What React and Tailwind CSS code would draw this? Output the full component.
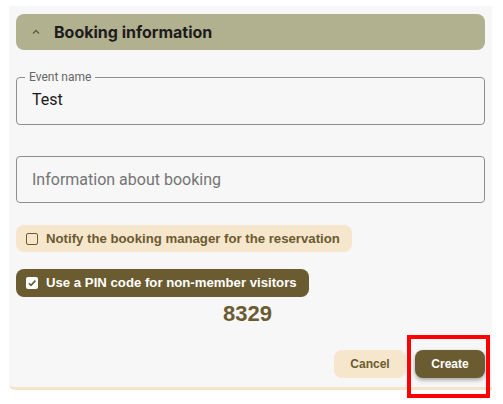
import React from "react";

export default function App() {
  return (
    <div className="relative w-[503px] h-[404px] bg-white pt-[6px] pl-[9px]">
      <div className="w-[483px] h-[384px] bg-[#f7f7f7] border-b-[3px] border-[#f4e4c9] rounded-bl-[6px] px-[7px] pt-[8px] flex flex-col">
        <div className="h-[36px] rounded-[8px] bg-[#b1b08f] flex items-center pl-[16px]">
          <svg width="8" height="6" viewBox="0 0 8 6" className="mr-[14px]">
            <polyline points="1,4.5 4,1.5 7,4.5" fill="none" stroke="#6b5a30" strokeWidth="1.4" />
          </svg>
          <span className="text-[16px] font-bold text-[#1c1c1c]" style={{ fontFamily: "Inter, sans-serif" }}>
            Booking information
          </span>
        </div>

        <fieldset className="mt-[21px] h-[54px] border border-[#8f8f8f] rounded-[4px] px-[8px] pb-0" style={{ fontFamily: "Roboto, sans-serif" }}>
          <legend className="px-[4px] text-[12px] leading-[12px] text-[#666]">Event name</legend>
          <div className="pl-[7px] pt-[5px] text-[16px] text-[#1a1a1a]">Test</div>
        </fieldset>

        <div className="mt-[31px] h-[47px] border border-[#8f8f8f] rounded-[4px] flex items-center pl-[15px] text-[16px] text-[#747474]" style={{ fontFamily: "Roboto, sans-serif" }}>
          Information about booking
        </div>

        <div className="flex flex-col items-start" style={{ fontFamily: "'Liberation Sans', Arial, sans-serif" }}>
          <div className="mt-[22px] h-[27px] w-[336px] rounded-[8px] bg-[#f6e6cc] flex items-center pl-[10px]">
            <span className="w-[12px] h-[12px] border-[1.5px] border-[#6b5a30] rounded-[2px] mr-[8px]" />
            <span className="text-[13.2px] font-bold text-[#6b5a30]">Notify the booking manager for the reservation</span>
          </div>
          <div className="mt-[17px] h-[28px] w-[293px] rounded-[8px] bg-[#6b5b31] flex items-center pl-[10px]">
            <span className="w-[12px] h-[12px] bg-white rounded-[2px] mr-[8px] flex items-center justify-center">
              <svg width="10" height="10" viewBox="0 0 10 10">
                <polyline points="1.8,5.2 4,7.4 8.4,2.6" fill="none" stroke="#6b5b31" strokeWidth="1.6" />
              </svg>
            </span>
            <span className="text-[13.2px] font-bold text-white">Use a PIN code for non-member visitors</span>
          </div>
          <div className="self-stretch text-center text-[22px] leading-[26px] font-bold text-[#6b5b31] mt-[4px] pr-[6px]">8329</div>
          <div className="self-stretch flex justify-end gap-[9px] mt-[23px]">
            <button className="w-[72px] h-[28px] rounded-[8px] bg-[#f6e6cc] text-[12px] font-bold text-[#6b5a30]">Cancel</button>
            <button className="w-[70px] h-[28px] rounded-[8px] bg-[#6b5b31] text-[12px] font-bold text-white shadow-[0_2px_4px_rgba(0,0,0,0.35)]">Create</button>
          </div>
        </div>
      </div>
      <div className="absolute left-[407px] top-[335px] w-[83px] h-[63px] border-[4px] border-[#ff0000]" />
    </div>
  );
}
